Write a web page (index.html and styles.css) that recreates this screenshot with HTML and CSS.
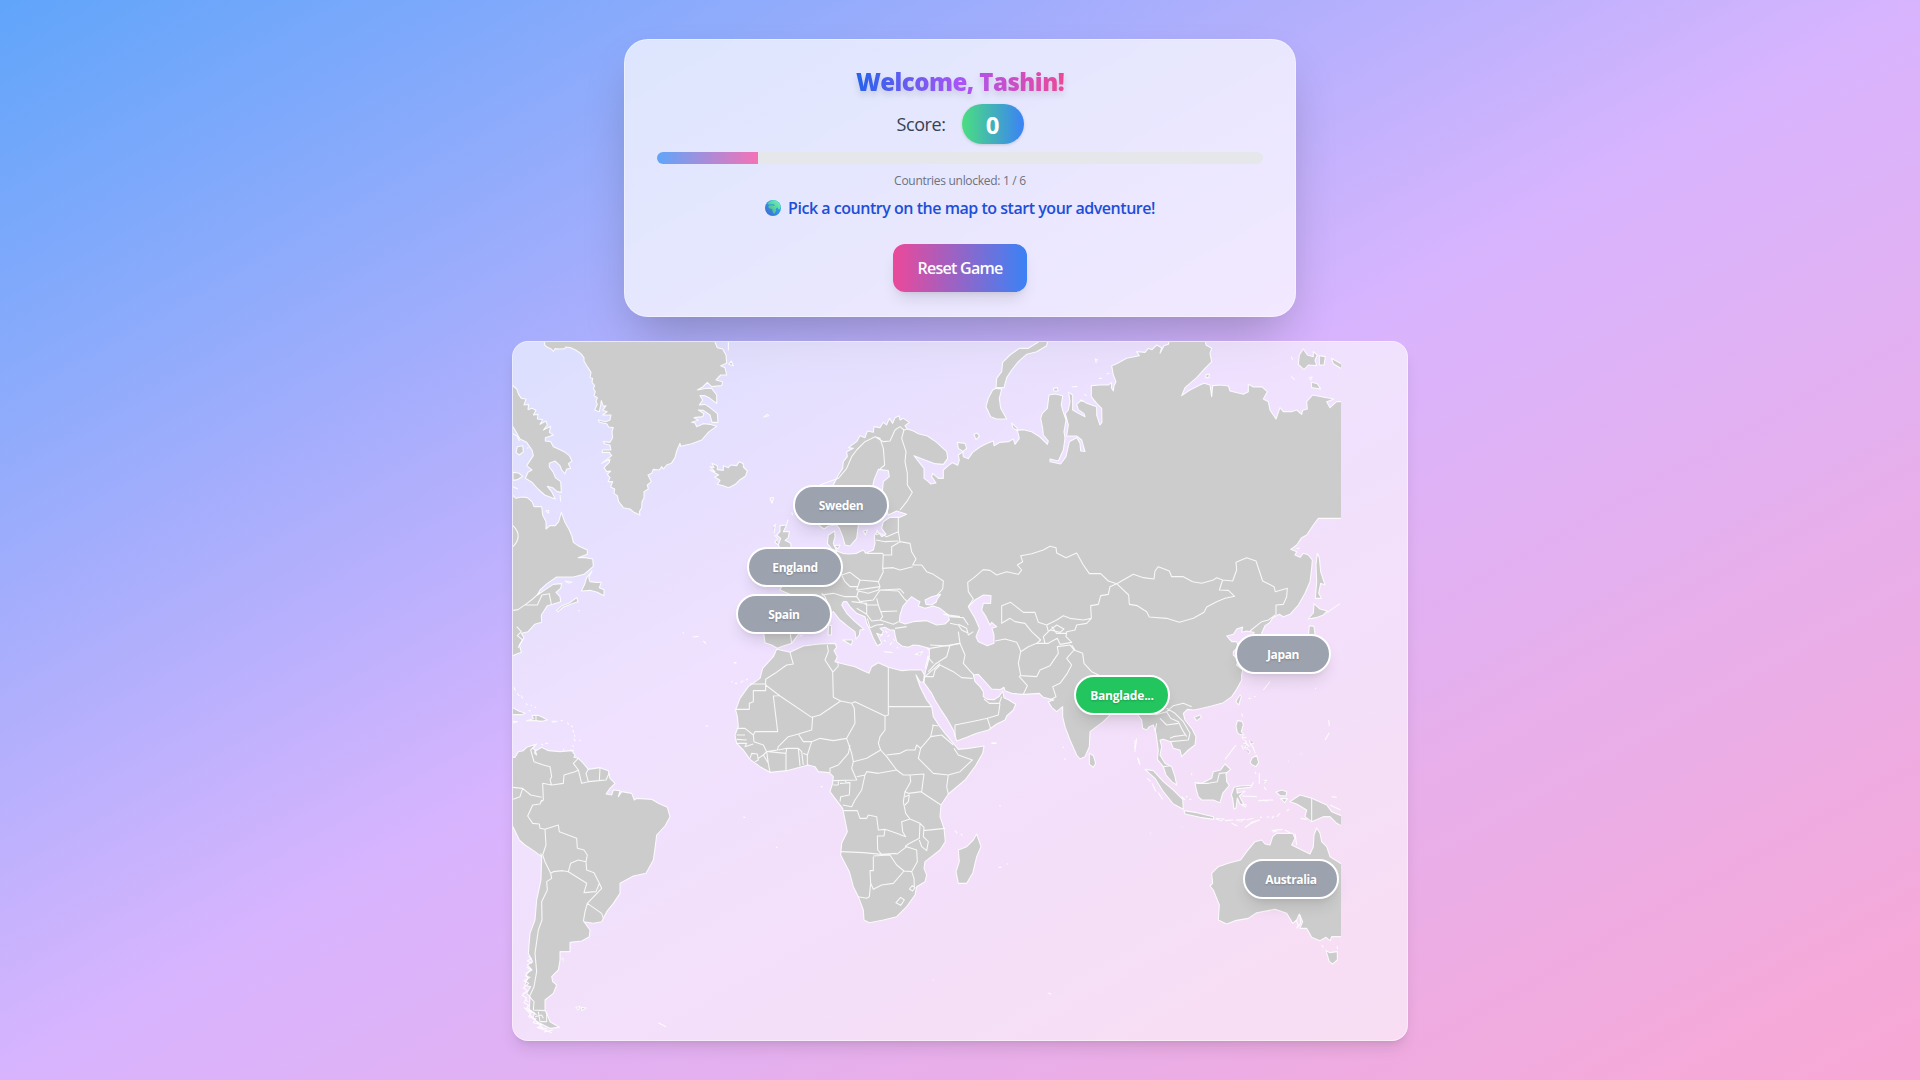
FILE: index.html
```html
<!DOCTYPE html>
<html lang="en">
<head>
<meta charset="utf-8">
<title>Country Adventure</title>
<link rel="stylesheet" href="styles.css">
</head>
<body>
<main class="page">
  <section class="card">
    <h1 class="title">Welcome, Tashin!</h1>
    <div class="score"><span class="score-label">Score:</span><span class="score-value">0</span></div>
    <div class="progress"><div class="progress-fill" style="width:16.667%"></div></div>
    <p class="caption">Countries unlocked: 1 / 6</p>
    <p class="hint">
      <svg class="globe" viewBox="0 0 16 16" aria-hidden="true">
        <defs><linearGradient id="sea" x1="1" y1="0" x2="0" y2="1"><stop offset="0" stop-color="#35b8f5"/><stop offset=".5" stop-color="#2f93e6"/><stop offset="1" stop-color="#4a5fc4"/></linearGradient><linearGradient id="land" x1="1" y1="0" x2="0" y2="1"><stop offset="0" stop-color="#6dfcae"/><stop offset="1" stop-color="#4aa88c"/></linearGradient></defs>
        <circle cx="8" cy="8" r="8" fill="url(#sea)"/>
        <path d="M2.5 3.2 5 1.2 8 .3 11 .6 14 3 15.6 6.5 15 9 13.6 9.4 12.6 7.6 11.4 8 10.8 9.4 11 11 9.6 13.4 8.4 13.6 7.6 11 7 9 4.6 8.6 3.2 7 4 5.4 7 5.2 9.4 6 9.4 4.6 7 4.2 5 4.6 3.4 4.4Z" fill="url(#land)"/>
      </svg>
      <span class="hint-text">Pick a country on the map to start your adventure!</span>
    </p>
    <button class="reset">Reset Game</button>
  </section>

  <section class="map">
    <svg class="world" viewBox="9 21 2484 2094" aria-hidden="true">
      <!-- Greenland, eastern Canada, Iceland -->
      <g>
        <path d="M104 10V30L112 37 124 42 130 49 135 41 148 42 164 41 167 36 182 38 197 45 212 55 222 68 222 78 232 95 243 112 240 128 248 130 246 142 254 152 250 160 256 170 252 182 262 188 258 200 262 208 254 225 268 230 272 210 274 197 280 214 288 212 278 226 292 230 278 240 303 240 300 255 287 260 265 255 268 262 290 266 296 276 310 278 306 290 308 308 300 322 280 320 283 326 300 330 303 345 278 345 276 352 298 352 305 362 275 385 300 372 298 382 282 398 290 410 302 408 292 418 300 428 294 440 308 440 302 456 314 462 312 475 322 482 326 500 340 518 360 522 372 532 390 540 388 530 395 518 396 500 402 488 402 470 415 462 412 450 424 440 414 420 425 415 430 403 448 405 455 395 460 402 470 390 484 385 495 368 500 348 510 325 512 334 545 326 575 315 597 290 620 274 600 268 580 266 560 275 555 264 545 262 565 256 552 248 578 245 582 236 565 225 580 226 600 240 606 262 624 262 622 236 600 218 585 208 568 210 578 195 570 182 585 182 600 190 620 205 620 180 605 160 590 160 562 165 578 156 592 142 605 155 635 152 638 140 618 135 632 120 650 120 645 98 632 92 650 85 648 60 638 42 622 38 615 21V10Z"/>
        <path d="M0 148 9 152 20 162 26 178 34 190 48 192 42 210 56 208 54 224 66 220 78 226 70 240 84 238 82 252 98 254 90 268 108 258 112 270 100 285 122 274 118 292 130 300 106 308 106 318 122 320 130 335 152 345 165 352 178 362 186 378 175 386 182 400 170 402 165 416 155 405 150 392 135 378 118 385 118 396 130 412 136 428 152 440 154 472 142 470 128 458 112 454 125 470 136 492 120 486 104 480 84 462 66 442 46 430 54 412 66 405 50 392 70 362 66 345 50 322 30 312 18 290 9 275 0 270Z"/>
        <path d="M0 482 9 482 18 490 34 486 52 488 66 500 72 515 95 515 98 540 108 560 108 582 120 572 136 572 146 560 154 532 164 560 178 585 186 605 190 622 204 632 232 645 232 658 204 668 225 668 248 672 250 694 236 706 222 718 190 726 140 726 112 745 90 765 82 780 106 764 130 748 155 746 152 760 138 772 150 785 152 800 128 808 112 812 94 840 95 862 74 868 54 890 34 895 42 908 28 930 34 952 18 958 9 962 0 962Z"/>
        <path d="M246 708 236 728 240 740 258 742 274 742 268 758 282 764 282 782 262 772 240 766 214 768 224 748 230 728ZM165 738 186 742 176 744ZM140 826 156 812 178 804 200 788 204 800 186 806 160 816 144 830ZM22 335 38 332 40 350 28 360 18 352ZM9 412 26 414 38 424 22 434 9 436ZM108 528 116 526 116 534ZM600 405 615 410 600 395 612 398 606 385 622 392 622 404 640 406 640 392 655 398 662 390 680 392 688 380 700 386 700 396 712 408 706 424 690 434 676 448 656 458 640 452 622 448 630 436 614 426 626 420ZM762 246 772 238 776 242ZM780 490 790 488 786 504ZM656 88 664 78 670 92ZM655 21 655 45ZM50 340 56 338M150 480 152 500M548 906 566 904M580 918 588 926M518 892 522 895M672 984 680 983"/>
        <path class="border" d="M9 826 24 824 50 806 68 792 90 772M46 810H82L96 780 118 776 124 808M20 875 34 890 22 902 38 915 24 938M9 572Q40 602 9 635M9 296 22 304 28 318M9 455 24 462M205 827H209"/>
      </g>

      <!-- Europe and Asia -->
      <g transform="translate(1170 0)">
        <path fill-rule="evenodd" d="M-3 242 0 255 10 250 28 262 15 272 22 282 40 288 55 296 82 303 110 322 140 350 143 370 130 388 105 386 75 375 42 362 60 385 72 400 72 430 85 440 92 447 108 444 95 425 98 415 115 430 130 430 130 405 145 392 158 383 173 391 178 375 175 360 190 350 175 340 172 322 195 325 200 340 188 350 190 365 205 371 218 352 240 336 262 325 280 318 282 332 300 322 325 320 340 312 345 328 358 310 352 286 370 284 395 290 420 306 442 328 445 318 430 300 428 280 422 250 427 235 442 220 447 180 465 177 488 182 484 210 490 232 498 255 492 290 495 310 490 345 475 378 450 372 450 380 482 387 498 365 508 320 530 308 540 325 542 348 555 349 545 315 530 303 500 303 505 270 496 235 505 225 510 200 506 172 518 180 518 225 535 235 555 245 552 236 535 224 530 208 545 195 560 205 590 215 590 240 600 270 606 262 605 220 590 205 574 185 574 152 600 150 625 150 635 142 634 158 640 168 642 152 648 140 640 120 635 92 650 86 680 70 718 62 710 50 735 52 745 40 756 44 770 30 785 38 780 55 792 32 805 28 810 10H915L918 30 935 40 930 55 935 80 915 100 890 128 855 158 845 182 870 165 895 152 912 145 930 150 935 185 938 152 960 150 985 153 990 168 1030 178 1045 170 1045 148 1060 156 1085 155 1102 170 1090 192 1105 200 1110 225 1128 252 1140 218 1150 230 1175 230 1190 225 1205 238 1208 226 1222 222 1220 200 1238 180 1280 188 1302 192 1280 200 1290 218 1310 200 1340 200V550H1255L1240 570 1220 600 1205 608 1190 630 1172 643 1190 650 1185 660 1200 667 1210 655 1225 660 1237 675 1235 700 1230 740 1215 775 1195 810 1170 838 1150 845 1138 838 1118 848 1110 862 1095 872 1085 895 1080 960H1050L1062 892 1040 888 1025 892 1028 876 1010 882 1000 898 980 903 995 920 1010 920 1015 935 1000 950 1000 960 1015 975 1010 990 1028 1005 1025 1020 1025 1035 1010 1063 995 1085 970 1103 935 1113 900 1121 882 1125 862 1123 850 1135 855 1155 875 1180 888 1205 885 1230 865 1245 845 1265 840 1245 820 1240 812 1220 790 1213 780 1215 785 1235 780 1260 795 1285 815 1295 825 1325 830 1350 815 1340 798 1320 790 1295 772 1273 775 1245 770 1210 768 1195 760 1170 748 1175 740 1185 728 1180 725 1155 710 1135 680 1120 650 1125 630 1140 610 1160 570 1190 568 1235 555 1265 540 1272 530 1260 510 1215 495 1175 488 1145 488 1115 470 1130 455 1117 445 1100 462 1095 430 1087 418 1075 370 1078 335 1075 315 1067 312 1057 300 1064 275 1062 255 1040 235 1018 220 1020 225 1040 240 1055 250 1070 250 1085 262 1093 282 1094 298 1084 308 1068 312 1088 325 1094 347 1108 340 1125 320 1143 315 1155 290 1167 265 1185 230 1195 200 1207 170 1218 160 1185 140 1150 120 1120 105 1095 95 1075 72 1043 76 1010 82 990 88 965 88 940 60 932 40 930 25 937 5 933-10 920-15 900-17 885-30 885-45 877-60 880-50 890-56 900-70 895-62 910-55 925-68 932-80 910-90 885-100 865-105 845-130 835-150 815-160 800-170 800-175 810-160 835-135 860-108 883-120 885-122 900-132 912-135 890-155 875-180 855-200 830-212 835-240 850-290 880-310 905-325 925-350 933-368 940-385 930-405 923-408 900-410 840H-340L-325 780-360 765-355 755-300 740-250 700-200 670-190 648-205 642-218 625-215 600-196 588-195 605-200 625-190 648-172 655-155 657-130 655-110 645-103 655-80 645-75 625-77 600-66 590-55 605-42 598-55 580-50 560-30 547 0 547 20 538-10 528-35 540-45 510-55 490-50 440-32 425-35 407-65 403-78 435-82 453-110 520-125 570-130 610-150 633-165 630-172 605-182 580-190 570-215 573-228 582-240 573-260 540-240 480-200 450-185 420-172 400-170 380-158 365-160 350-140 340-155 338-130 320-120 302-105 308-98 288-80 292-78 275-60 278-50 262-40 270-32 250-22 265-15 248ZM35 785 20 800 8 815 0 840-2 860 15 867 40 860 80 857 110 870 135 867 148 855 145 840 120 820 100 813 75 820 55 813 60 800 50 795ZM75 795 95 785 122 778 112 792 108 802 95 810 78 808ZM205 815 225 795 250 780 273 782 272 805 250 805 245 825 258 845 270 870 275 862 290 875 276 880 282 900 282 925 262 932 235 920 228 905 238 880 225 850 212 828Z"/>
        <!-- Novaya Zemlya, Arctic islands, Sakhalin, Hokkaido -->
        <path d="M445 10 440 32 410 50 380 58 355 80 335 105 320 128 312 158 288 158 290 130 305 110 308 82 330 60 358 40 385 40 415 21V10ZM288 160 305 162 298 190 302 220 320 252 290 252 272 245 258 215 265 190 278 165ZM222 298 232 294 238 304 228 314ZM460 160 472 158 474 168 462 168ZM335 264 352 280 350 286 338 278ZM1198 60 1210 42 1222 60 1240 65 1240 50 1252 60 1245 75 1250 92 1225 90 1212 104 1195 88ZM1258 62 1276 65 1272 90 1258 90ZM1294 70 1330 90V104L1300 86ZM1228 128 1236 126 1232 135ZM1234 142 1252 146 1262 162 1235 158ZM918 118 928 118 926 128 918 128ZM1252 655 1258 668 1262 710 1275 750 1262 745 1256 775 1264 790 1246 790 1250 740 1248 690ZM1242 806 1260 822 1282 828 1270 840 1248 848 1236 850 1224 852 1240 834ZM1228 872 1242 874 1246 905H1225ZM586 72 592 74 588 82ZM1174 65 1178 75M597 130H606M620 118 628 114M515 156 532 154M540 195 550 200M553 178 560 182M1282 832 1320 806M1174 124 1184 135M1190 640H1198"/>
        <!-- British Isles, Mediterranean islands, Sri Lanka -->
        <path d="M-360 572-340 570-350 590-332 590-335 608-345 616-328 625-325 650H-355L-365 630-358 610-370 600-360 590ZM-380 575-374 568-378 595M-388 490-380 488-384 504ZM-340 568-336 554M-325 532-322 540M-376 600-368 612-376 622-364 630M-110 588-98 585-104 600ZM-198 632-180 630-186 642ZM-172 915-142 915-146 930ZM-214 870-205 872-206 900-216 900ZM46 958 68 950 60 960ZM-48 950-22 953M-300 903-292 900M-60 905-52 898M-38 905-32 900M-30 930-24 922M-44 888-38 894M-48 915-42 920M-20 912-16 918M-10 936-5 940M-72 590-66 585M568 1255 580 1262 587 1285 580 1297 568 1288ZM274 1224H290M710 1210 706 1240M712 1268 718 1285M495 1270V1275M488 1237H492"/>
        <path class="border" d="M-240 450-185 430-160 400-145 365-130 345-105 320-75 305-60 310-50 340-46 390-60 402M-75 305-50 320-30 318-15 285 0 275 12 285 22 282M12 285 5 310 18 350 15 380 22 415 22 450 37 472 20 500 0 525M-5 547-5 590 0 620 30 625 35 650 48 672 38 690 65 690 80 710 100 718 130 738 128 762 110 782M-72 615-45 620-5 618M-72 600-60 595-40 605-5 590M0 620-25 635-25 660-50 660-52 655-100 655M-52 700-50 660M-50 710-52 700-20 698 0 705 38 695M-175 720-150 712-120 735-65 740-50 710M-65 740-60 755-95 760-130 765-120 735M-175 720-165 740-150 755-125 755M-235 780-200 775-165 785-130 785-125 768-95 775-65 765-60 755M-130 785-120 800-80 795-60 765-5 768 12 790 20 798M-60 765 0 762 12 775M-120 800-98 810-65 810-70 790M-65 810-58 830-8 828M-58 830-52 845-60 855-20 868-5 860M-145 800-100 805-100 838-130 820M-100 838-85 858-60 855M-98 850-90 878-70 870-50 868M-330 870-320 875-330 890-325 925M-235 775-225 785-215 810M20 875-15 880M148 845 190 848 205 870M150 865 175 870 185 885 205 895M130 838 180 845M205 815 220 792 205 770 203 742 222 728 250 704 270 706 290 720 320 710 355 718 365 705 352 690 368 680 362 662 395 656 430 645 450 634 468 638 470 654 498 668 530 654 550 690 568 716 602 716 625 738 650 746 630 755 625 778 602 782 595 808 572 812 574 850 550 855 510 850 490 842 470 855 440 870 415 862 405 832 370 832 332 802 305 812V865L330 850 345 860 375 865 395 890 422 915 410 925 385 935 362 950 358 938 350 922 315 912 285 918M574 850 560 865 530 870 525 885 500 890 498 905 515 922 480 928 472 910 445 925 410 925M440 870 445 890 430 905 435 925M445 890 470 870 492 882 480 892 450 885M498 895 470 895 455 875M650 746 700 718 730 728 762 732 765 708 775 695 808 708 815 725 850 725 878 740 905 745 940 735 950 728 968 735 998 738 1010 705 1008 682 1040 668 1068 678 1088 738 1122 755 1126 770 1162 760 1160 785 1150 808 1128 810 1128 840M968 735 958 765 985 766 1004 784 975 790 950 800 920 816 912 832 880 850 838 862 800 850 748 846 740 830 712 812 688 808 686 780 650 746M1126 840 1105 855 1085 860 1050 888M362 950 355 985 362 1020 358 1025 382 1052 370 1078M362 1022 410 1025 420 1005 450 992 475 955 472 935 510 930 522 945 548 955 552 985 575 1010 600 1022M522 945 500 970 515 990 502 1015 480 1045 458 1055 468 1085 450 1095M515 930 525 945M90 940 150 930 180 925 175 890M150 930 140 965 105 988 85 1010M120 985 75 1025 100 1025 105 1005 120 990 160 1010 185 1028 218 1030M180 925 195 960 190 985 212 1010 222 1020M175 868 200 880 205 900 220 890M82 965 100 985M252 1092 268 1105 298 1105 305 1085M300 1105 295 1140 262 1150 272 1180M262 1150 225 1158 165 1170V1205M575 1035 600 1060 650 1075M800 1130 820 1112 850 1105 875 1115M765 1140 800 1130 812 1150 835 1160 850 1190 860 1205M800 1120 825 1135 850 1160 870 1195 865 1215 812 1220M770 1165 765 1190M780 1150 800 1170 835 1165"/>
      </g>

      <!-- Africa -->
      <g transform="translate(630 855)">
        <path d="M170 88 210 97 250 78 300 72 345 70 350 82 342 92 352 110 345 125 370 132 405 140 430 152 447 160 455 140 475 128 505 142 545 152 570 150 605 150 613 165 610 187 600 185 588 165 600 200 620 240 635 260 640 290 658 318 675 340 700 370 715 388 745 385 792 378 788 400 765 440 735 480 685 522 663 555 660 590 672 625 676 665 660 690 615 725 612 745 620 765 615 785 590 800 585 825 560 860 530 890 490 900 448 908 432 900 430 870 415 830 400 800 388 755 362 705 365 670 382 635 375 600 368 565 345 535 330 515 338 490 340 470 328 458 295 455 285 440 265 435 200 452 150 457 120 440 90 418 70 390 50 370 45 345 55 320 52 290 47 270 60 235 85 200 120 175 128 145 160 110ZM770 642 783 680 770 710 758 760 740 790 715 790 708 755 718 725 715 690 740 680 760 660ZM42 128H48M34 185H38M45 190H52M62 188 70 182M78 180 84 176M302 500H308M70 592H76M168 682H172M815 370H828M705 632 712 640M722 642 728 646M836 742H844M860 732H864M838 557H842"/>
        <path class="border" d="M210 97 215 115 220 132 200 135 165 160 137 178V192H90M137 192V212H100V245L88 250V268H47M137 195 180 228 275 292 300 285 362 243 340 232 338 155 315 120 325 95 322 75M340 155 355 138 353 125M180 226 160 228 173 335H105L100 345 75 325 50 325M278 292 275 330 235 342 205 350 175 380 172 390 140 395 130 375 102 365 100 345M235 342 250 365 275 365 300 355 340 362 380 355 405 310 403 265 395 250 362 243M395 250 405 245 495 288 505 285V142M505 260H635M495 288V330L480 350 475 370 482 390M380 355 395 400 400 425 440 415 482 390 500 410 530 450M390 375 385 400 355 435 330 445V458M400 425 395 445 410 480 340 482M410 470 435 465 440 455 475 460 530 450 550 465 570 465M500 405 540 400 560 390 585 390 590 375 602 385 595 415 610 430 640 460 685 465 720 455 757 420 715 405 702 385M640 315 632 350 602 385M632 350 665 345 700 375M655 318 636 315M685 465 680 500 685 522M570 465 612 462 605 515 565 520 555 515 572 485ZM605 517 663 555M555 515 550 545 557 580 570 597M555 530 568 525 565 545 555 555M570 597 545 605 548 635 557 650 530 640 495 628 475 630 470 590 445 585 440 595 420 595 412 572H370M495 628 492 648H472L473 690 485 703M362 695 430 698 485 703 530 700M460 710V752H450L452 790 448 830 440 835 415 830M460 708 510 705 530 735 552 753 520 790 485 795 460 808 452 790M530 703 560 680 590 690 592 725 575 755 552 753M570 597 600 610 598 655 565 672 555 680M600 610 612 622 610 650 625 665 620 692 605 680 598 660M610 632 675 625M575 755 582 775 583 800M577 797 585 803 578 813 568 807ZM528 848 542 832 553 840 542 856ZM50 345 75 345M50 358 80 360M50 370H80L75 380 100 372M90 415 95 400 112 402 115 420 105 425M115 415 130 405 145 430 150 457M130 405 140 395 145 430M145 395 198 400 200 385 235 385 245 395 250 435M198 400V452M235 385 240 438M175 390 200 385M250 400 262 405V435M262 405 275 365M355 495H340M355 495V483M360 490 390 488 388 525 362 530 360 545M435 465 425 510 405 540 395 560 368 555M376 483 380 490M630 75 685 78 720 70M625 108 615 145M620 85 630 90"/>
      </g>

      <!-- South America -->
      <g transform="translate(0 1155)">
        <path d="M0 112 15 112 25 95 40 92 50 82 80 72 68 85 78 92 95 82 115 92 150 95 185 92 195 105 192 112 205 115 220 130 235 148 270 143 295 152 300 175 315 190 300 205 288 222 305 225 310 210 330 212 325 230 335 215 365 220 373 240 380 235 425 238 445 250 472 262 480 290 465 318 440 345 435 385 430 420 408 460 370 468 330 490V520L310 550 290 575 275 605 250 610 222 605 240 630 238 650 215 663 180 667V695H150V720L145 750 125 770 128 785 140 795 130 820 105 840V870L112 885 120 905 148 922 120 925 90 910 68 895 74 880 58 870 60 830 50 820 62 800 44 795 54 775 48 760 66 750 52 735 68 725 55 700 60 640 75 600 80 540 93 480 95 410 75 395 45 375 28 360 9 320H0ZM198 862 210 860 204 870ZM214 862 228 864 216 872ZM153 718 160 716 158 724M445 908 468 920M585 18H595"/>
        <path class="border" d="M72 80 62 90 72 125 100 135 120 140 125 170 120 180M120 180 125 195 160 190 162 165 195 155 205 150 190 130 205 115M205 150 215 190 235 185 228 160 235 148M235 185 268 182 270 143M268 182 288 180 298 158M125 195 98 190 100 240 90 248M9 202 38 205 62 225 95 232M38 205 30 230 9 238M95 240 90 252 68 255 53 288 68 310 88 312 90 325 105 328M105 328 145 315 148 335 200 355 202 385 222 390 232 405 228 425M105 328 108 375 98 405 105 425 122 460 130 455 158 452 175 455 182 430 205 420 228 425 230 450 252 458 268 490 258 515 222 518 230 490 175 455M122 460 125 475 110 485 112 510 95 545 96 600 85 630 75 700 80 755 72 800 58 830 72 845 70 870 105 872M95 410 92 400M268 490 275 505 232 550 225 575 220 605M232 550 275 580 280 595M85 875 90 905 110 905V875M50 862 80 885M45 840 55 845M38 822 48 815M42 862 60 880M60 885 100 925M75 890 95 885 100 895M80 922 125 938M75 90 80 105 74 100ZM56 708 64 716 52 722 66 730M50 742 62 748 46 768 60 772 42 782 56 790 40 804 52 812 36 826 50 834 42 848 56 856 48 868 64 876 56 890 78 896 70 908 96 914 84 922 110 926 104 936 128 930"/>
      </g>

      <!-- Caribbean -->
      <g transform="translate(0 1035)">
        <path d="M0 82 9 84 28 94 46 100 36 104 9 104H0ZM66 106 84 106 98 112 112 120 96 124 78 122 64 122 50 122 70 116ZM9 124 22 125 12 128ZM126 124 142 124 130 127ZM152 122H158M172 128 176 134M184 136 188 142M188 150 192 158M194 164V170M192 176 196 184M208 181H212M186 196 192 200M160 206 162 212M180 210 192 212M94 192 100 196M106 190H114M12 22 16 32M22 40 28 48M34 46 38 56M48 70 52 76M56 92H62M62 76H66M74 82H78"/>
        <path class="border" d="M78 107V122"/>
      </g>

      <!-- South-east Asia and Australia -->
      <g transform="translate(1860 795)">
        <path d="M245 820 265 800 295 790 332 780 350 755 375 725 395 720 405 732 420 735 428 710 440 700 488 700 495 715 485 735 515 750 540 762 550 740 552 705 560 684 570 700 575 725 590 740 600 770 640 795V1010L605 1010 600 1022 588 1012 570 1022 545 1012 530 985 510 985 518 965 508 942 500 960 488 970 470 940 435 928 380 938 355 955 315 962 290 972 265 960 268 915 250 870 240 858 248 850 246 830ZM588 1052 600 1058 622 1055 622 1080 608 1092 598 1085ZM480 605 510 585 545 595 590 615 605 635 640 650V680L620 670 600 650 580 650 545 665 525 650 530 630 500 612ZM438 576 455 570 470 575 468 588 450 587ZM452 596H472L464 608ZM195 548 215 550 245 535 250 515 272 510 285 492 302 508 288 520 290 545 298 556 278 580 270 608 250 600 215 600 205 590 198 565ZM45 508 70 512 100 545 130 570 158 598 160 628 130 612 100 575 75 535ZM162 632 200 638 250 650 252 658 210 652 165 642ZM258 656 282 657 272 662ZM285 662 310 660M318 660 345 658 332 664ZM350 660 370 655M346 682 360 672 388 660 366 666ZM305 670 322 678M312 627 308 595 304 585 312 562 330 558 365 556 370 548 362 562 320 566 322 580 345 573 328 588 342 614 330 612 322 594 318 624ZM322 362 336 364 340 374 334 395 342 405 330 404 322 398 318 378ZM335 415 350 412M345 425 358 440M360 430 372 445M350 445 360 455 355 462M335 435 340 448M370 445 376 460M360 488 366 474 380 466 386 488 378 500 366 494ZM336 408 342 418 350 424M340 430 350 432 344 444 354 440M358 420 362 432 372 430M285 478 318 435M320 300 330 285 334 290 326 315 318 306ZM192 352 210 345 214 352 200 362ZM400 543 410 540 402 550M402 560 408 570M385 602 430 600M400 600 412 604M440 650 450 640M425 655 432 648M470 632 478 628M390 652H396M336 588 380 590M336 616 348 622M425 692 458 688M465 690 480 698M428 696 440 694M605 590 620 592M600 615 632 630M185 520V526M155 590 165 600M178 598H184M168 588 172 592M52 535 62 545M66 550 78 575M85 578 98 598M15 420V455M25 475 30 495M355 295H362M372 290H376M400 270 420 245M335 340 338 350M375 515 378 522M388 520V552M596 360 598 378M598 398 585 420M512 462H515M474 484H476M555 265H558M575 1035 580 1042M622 1038V1048M60 700H62M157 681H159M350 618 345 612M410 652 418 650"/>
        <path class="border" d="M545 595V665M200 550 235 550 262 545 268 520 292 518M120 415 130 410 165 405M100 500 118 498M498 960 505 975 500 985M495 700 500 735M512 655 530 658M510 945 512 970 500 985"/>
      </g>
      <path class="border" d="M1267 1935H1270M1614 1974 1624 1978"/>
    </svg>
    <button class="pin pin-sweden">Sweden</button>
    <button class="pin pin-england">England</button>
    <button class="pin pin-spain">Spain</button>
    <button class="pin pin-japan">Japan</button>
    <button class="pin pin-bangladesh open">Banglade...</button>
    <button class="pin pin-australia">Australia</button>
  </section>
</main>
</body>
</html>
```
FILE: styles.css
```css
* { box-sizing: border-box; }
body { margin: 0; font-family: "Open Sans", "Noto Sans", sans-serif; }
h1, p { margin: 0; }
button { font-family: inherit; padding: 0; border: 0; }

.page {
  min-height: 1080px;
  display: flex;
  flex-direction: column;
  align-items: center;
  justify-content: center;
  gap: 24px;
  background: linear-gradient(to bottom right, #60a5fa, #d8b4fe, #f9a8d4);
}

.card {
  width: 672px;
  height: 278px;
  padding: 24px 32px;
  display: flex;
  flex-direction: column;
  align-items: center;
  border: 1px solid rgba(255, 255, 255, .4);
  border-radius: 24px;
  background: rgba(255, 255, 255, .7);
  box-shadow: 0 25px 50px -12px rgba(0, 0, 0, .25);
}
.title {
  height: 40px;
  padding-top: 2px;
  font-size: 24px;
  line-height: 32px;
  font-weight: 800;
  letter-spacing: -.53px;
  white-space: nowrap;
  background: linear-gradient(to right, #2563eb, #a855f7, #ec4899);
  -webkit-background-clip: text;
  background-clip: text;
  color: transparent;
  filter: drop-shadow(0 4px 3px rgba(0, 0, 0, .12));
}
.score { display: flex; align-items: center; gap: 16px; height: 40px; margin-bottom: 8px; }
.score-label { font-size: 18px; font-weight: 500; letter-spacing: -.4px; color: #374151; }
.score-value {
  width: 62px;
  height: 40px;
  border-radius: 20px;
  font-size: 24px;
  line-height: 41px;
  font-weight: 700;
  text-align: center;
  color: #fff;
  background: linear-gradient(to right, #4ade80, #3b82f6);
  box-shadow: 0 1px 3px rgba(0, 0, 0, .15);
}
.progress { width: 100%; height: 12px; border-radius: 6px; background: #e5e7eb; overflow: hidden; }
.progress-fill { height: 100%; background: linear-gradient(to right, #60a5fa, #f472b6); }
.caption { margin-top: 9px; font-size: 12px; line-height: 16px; letter-spacing: -.29px; color: #6b7280; white-space: nowrap; }
.hint {
  margin-top: 7px;
  height: 24px;
  display: flex;
  align-items: center;
  gap: 7px;
  font-size: 16px;
  line-height: 24px;
  font-weight: 600;
  letter-spacing: -.47px;
  color: #1d4ed8;
  white-space: nowrap;
}
.globe { width: 16px; height: 16px; }
.reset {
  margin-top: 24px;
  width: 134px;
  height: 48px;
  flex: none;
  border-radius: 12px;
  font-size: 16px;
  font-weight: 600;
  letter-spacing: -.72px;
  color: #fff;
  background: linear-gradient(to right, #ec4899, #3b82f6);
  box-shadow: 0 10px 15px -3px rgba(0, 0, 0, .1), 0 4px 6px -4px rgba(0, 0, 0, .1);
}

.map {
  position: relative;
  width: 896px;
  height: 700px;
  overflow: hidden;
  border: 1px solid rgba(255, 255, 255, .4);
  border-radius: 16px;
  background: rgba(255, 255, 255, .6);
  box-shadow: 0 10px 15px -3px rgba(0, 0, 0, .1), 0 4px 6px -4px rgba(0, 0, 0, .1);
}
.world { display: block; width: 828px; height: 698px; }
.world path { fill: #ccc; stroke: #fff; stroke-opacity: .85; stroke-width: 3.3; stroke-linejoin: round; }
.world .border { fill: none; }

.pin {
  position: absolute;
  width: 96px;
  height: 40px;
  border: 2px solid #fff;
  border-radius: 20px;
  background: #9ca3af;
  color: #fff;
  font-size: 12px;
  font-weight: 700;
  letter-spacing: -.35px;
  text-shadow: 0 1px 2px rgba(0, 0, 0, .2);
  box-shadow: 0 10px 15px -3px rgba(0, 0, 0, .1), 0 4px 6px -4px rgba(0, 0, 0, .1);
}
.pin.open { background: #22c55e; letter-spacing: -.2px; }
.pin-sweden { left: 280px; top: 143px; }
.pin-england { left: 234px; top: 205px; }
.pin-spain { left: 223px; top: 252px; }
.pin-japan { left: 722px; top: 292px; }
.pin-bangladesh { left: 561px; top: 333px; }
.pin-australia { left: 730px; top: 517px; }
```
